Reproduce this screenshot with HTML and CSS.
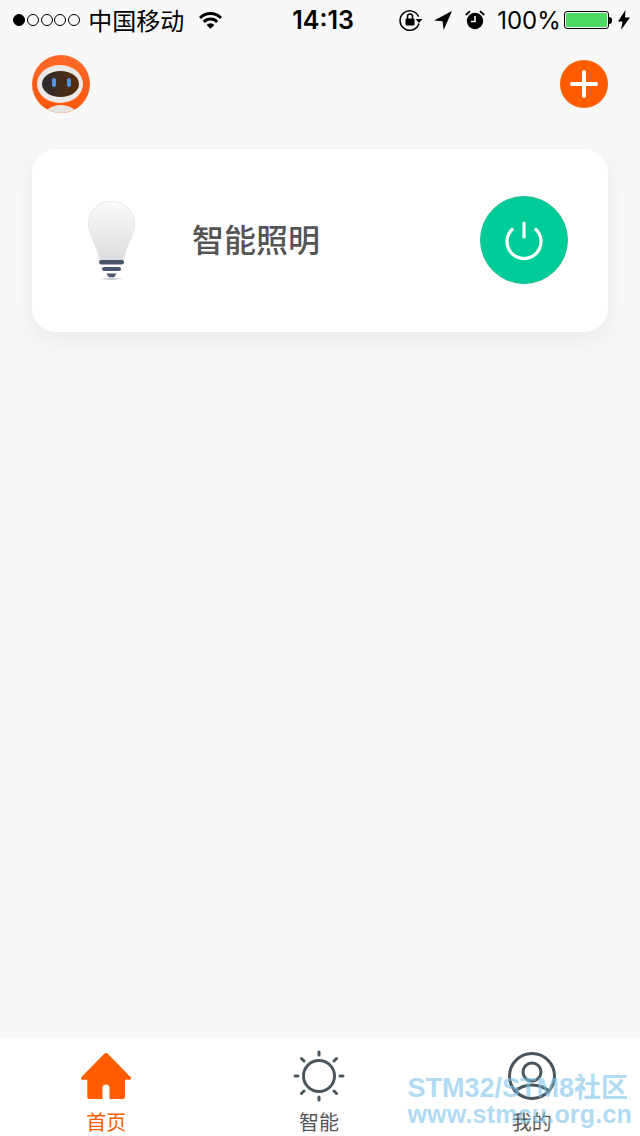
FILE: index.html
```html
<!DOCTYPE html>
<html lang="zh-CN">
<head>
    <meta charset="UTF-8">
    <meta name="viewport" content="width=device-width, initial-scale=1.0">
    <title>智能照明</title>
    <link rel="stylesheet" href="styles.css">
</head>
<body>

    <!-- Status bar -->
    <div class="status-bar">
        <div class="signal">
            <span class="dot dot-on"></span>
            <span class="dot"></span>
            <span class="dot"></span>
            <span class="dot"></span>
            <span class="dot"></span>
        </div>
        <span class="carrier">中国移动</span>
        <svg class="wifi" width="23" height="18" viewBox="0 0 26 20">
            <path d="M0 6.500a18 18 0 0 1 26 0l-2.300 2.400a15 15 0 0 0-21.400 0z" fill="#000"/>
            <path d="M4.300 11a12 12 0 0 1 17.400 0l-2.300 2.400a8.700 8.700 0 0 0-12.800 0z" fill="#000"/>
            <path d="M8.600 15.600a5.800 5.800 0 0 1 8.800 0L13 20z" fill="#000"/>
        </svg>
        <span class="time">14:13</span>
        <svg class="lock" width="24" height="22" viewBox="0 0 24 22">
            <path d="M20 14.500A9.700 9.700 0 1 1 19.600 7.600" fill="none" stroke="#000" stroke-width="1.500"/>
            <path d="M16.500 10h7l-3.500 4z" fill="#000"/>
            <rect x="6.500" y="9.500" width="9" height="7" rx="1" fill="#000"/>
            <path d="M8.500 10V7.600a2.500 2.500 0 0 1 5 0V10" fill="none" stroke="#000" stroke-width="1.500"/>
        </svg>
        <svg class="arrow" width="18" height="19" viewBox="0 0 18 19">
            <path d="M18 0L0 9.500l8.500 .8 1.200 8.700z" fill="#000"/>
        </svg>
        <svg class="alarm" width="20" height="20" viewBox="0 0 20 20">
            <circle cx="10" cy="11" r="8.200" fill="#000"/>
            <path d="M10 6v5.500H6" fill="none" stroke="#fff" stroke-width="1.500"/>
            <path d="M.8 5L5 1.200M19.200 5L15 1.200" stroke="#000" stroke-width="1.800"/>
        </svg>
        <span class="percent">100%</span>
        <div class="battery"><div class="battery-fill"></div></div>
        <span class="battery-tip"></span>
        <svg class="bolt" width="12" height="20" viewBox="0 0 12 20">
            <path d="M7.500 0L0 11.500h4.500L3 20l9-12.500H7z" fill="#000"/>
        </svg>
    </div>

    <header class="top-row">
        <svg class="avatar" width="58" height="58" viewBox="0 0 58 58">
            <defs>
                <linearGradient id="faceGrad" x1="0" x2="1" y1="0" y2="0">
                    <stop offset="0" stop-color="#2b2b2e"/>
                    <stop offset="1" stop-color="#5a2c08"/>
                </linearGradient>
                <linearGradient id="shellGrad" x1="0" x2="0" y1="0" y2="1">
                    <stop offset="0" stop-color="#ff6a2c"/>
                    <stop offset="1" stop-color="#fb5508"/>
                </linearGradient>
                <clipPath id="avatarClip"><circle cx="29" cy="29" r="29"/></clipPath>
            </defs>
            <circle cx="29" cy="29" r="29" fill="url(#shellGrad)"/>
            <g clip-path="url(#avatarClip)">
                <ellipse cx="29" cy="62" rx="17" ry="12" fill="#e6e2e0"/>
            </g>
            <ellipse cx="28" cy="29" rx="23" ry="19" fill="#ebe9e8"/>
            <ellipse cx="28.500" cy="29" rx="18.500" ry="13" fill="url(#faceGrad)"/>
            <rect x="20" y="23" width="4" height="9" rx="2" fill="#4f94e6"/>
            <rect x="35" y="23" width="4" height="9" rx="2" fill="#4f94e6"/>
        </svg>
        <button class="add-button">
            <svg width="28" height="28" viewBox="0 0 28 28">
                <path d="M14 2v24M2 14h24" stroke="#fff" stroke-width="4" stroke-linecap="round"/>
            </svg>
        </button>
    </header>

    <main class="content">
        <div class="device-card">
            <svg class="bulb" width="48" height="80" viewBox="0 0 48 80">
                <defs>
                    <linearGradient id="bulbGrad" x1="0" x2="0" y1="0" y2="1">
                        <stop offset="0" stop-color="#fbfbfb"/>
                        <stop offset="1" stop-color="#dcdcde"/>
                    </linearGradient>
                    <radialGradient id="bulbShadow">
                        <stop offset="0" stop-color="#b5b8bd"/>
                        <stop offset="1" stop-color="#ffffff"/>
                    </radialGradient>
                </defs>
                <path d="M23.500 .5C10.500 .5 .5 10 .5 23c0 12 8 19 11 36.500h24C38.500 42 46.500 35 46.500 23 46.500 10 36.500 .5 23.500 .5z" fill="url(#bulbGrad)" stroke="#e8e8e8"/>
                <rect x="11" y="59" width="25" height="4.500" rx="2.200" fill="#4a566d"/>
                <rect x="14" y="66" width="19" height="4" rx="2" fill="#4a566d"/>
                <path d="M18.500 72.500h10l-2.500 4h-5z" fill="#4a566d"/>
                <ellipse cx="23.500" cy="78" rx="13" ry="1.500" fill="url(#bulbShadow)"/>
            </svg>
            <span class="device-name">智能照明</span>
            <button class="power-button">
                <svg width="44" height="44" viewBox="0 0 44 44">
                    <path d="M10 11.500a17 17 0 1 0 24 0" fill="none" stroke="#fff" stroke-width="3.200" stroke-linecap="round"/>
                    <path d="M22 5v14" stroke="#fff" stroke-width="3.200" stroke-linecap="round"/>
                </svg>
            </button>
        </div>
    </main>

    <!-- Bottom tabs -->
    <nav class="tab-bar">
        <div class="tab tab-active">
            <div class="tab-icon">
                <svg width="52" height="48" viewBox="0 0 52 48">
                    <path d="M26 1a2 2 0 0 1 1.500 .6L50.500 25c1.200 1.300 .5 2.800-1 2.800H45v17.200a2 2 0 0 1-2 2H29.500V36a3.500 3.500 0 0 0-7 0v11H9.300a2 2 0 0 1-2-2V27.800H2.500c-1.500 0-2.200-1.500-1-2.800L24.500 1.600A2 2 0 0 1 26 1z" fill="#ff5c00"/>
                </svg>
            </div>
            <span>首页</span>
        </div>
        <div class="tab">
            <div class="tab-icon">
                <svg width="52" height="52" viewBox="0 0 52 52">
                    <circle cx="26" cy="26" r="15.500" fill="none" stroke="#4a555c" stroke-width="3"/>
                    <path d="M26 2v3M26 47v3M2 26h3M47 26h3M8.500 8.500l2.500 2.500M41 41l2.500 2.500M43.500 8.500L41 11M11 41l-2.500 2.500" stroke="#4a555c" stroke-width="3" stroke-linecap="round"/>
                </svg>
            </div>
            <span>智能</span>
        </div>
        <div class="tab">
            <div class="tab-icon">
                <svg width="48" height="48" viewBox="0 0 48 48">
                    <circle cx="24" cy="24" r="22.500" fill="none" stroke="#4a555c" stroke-width="3"/>
                    <circle cx="24" cy="20" r="9" fill="none" stroke="#4a555c" stroke-width="3"/>
                    <path d="M6 40C11 35.500 17 33 24 33S37 35.500 42 40" fill="none" stroke="#4a555c" stroke-width="3"/>
                </svg>
            </div>
            <span>我的</span>
        </div>
    </nav>

    <div class="watermark">
        <div class="watermark-title">STM32/STM8社区</div>
        <div class="watermark-url">www.stmcu.org.cn</div>
    </div>

</body>
</html>
```

FILE: styles.css
```css
/* General Body Styling */
body {
    font-family: "Liberation Sans", "Noto Sans CJK SC", sans-serif;
    background-color: #f8f8f8;
    margin: 0;
    width: 640px;
    height: 1136px;
    display: flex;
    flex-direction: column;
    position: relative;
    overflow: hidden;
    color: #000;
}

/* Status Bar */
.status-bar {
    display: flex;
    align-items: center;
    height: 40px;
    padding-left: 13px;
    flex-shrink: 0;
}

.signal {
    display: flex;
    gap: 1.8px;
}

.dot {
    width: 10px;
    height: 10px;
    border: 1px solid #000;
    border-radius: 50%;
}

.dot-on {
    background-color: #000;
}

.carrier {
    font-size: 24px;
    margin-left: 8px;
    padding-bottom: 2px;
    width: 96px;
}

.wifi {
    margin-left: 15px;
}

.time {
    font-family: Inter, sans-serif;
    font-size: 25px;
    font-weight: 600;
    margin-left: 70px;
    width: 63px;
}

.lock {
    margin-left: 44px;
}

.arrow {
    margin-left: 11px;
}

.alarm {
    margin-left: 13px;
}

.percent {
    font-family: Inter, sans-serif;
    font-size: 24px;
    margin-left: 12px;
    width: 61px;
}

.battery {
    width: 41px;
    height: 14px;
    margin-left: 6px;
    padding: 1px;
    border: 1px solid #000;
    border-radius: 3px;
}

.battery-fill {
    height: 100%;
    background-color: #4cd964;
    border-radius: 1px;
}

.battery-tip {
    width: 3px;
    height: 7px;
    background-color: #000;
    border-radius: 0 3px 3px 0;
}

.bolt {
    margin-left: 6px;
}

/* Header Styling */
.top-row {
    display: flex;
    justify-content: space-between;
    align-items: center;
    padding: 15px 32px 0;
    flex-shrink: 0;
}

.avatar {
    display: block;
}

.add-button {
    width: 48px;
    height: 48px;
    background-color: #ff5c00;
    border: none;
    border-radius: 50%;
    padding: 0;
    display: flex;
    align-items: center;
    justify-content: center;
}

/* Device Card */
.content {
    flex: 1;
    padding: 36px 32px 0;
}

.device-card {
    display: flex;
    align-items: center;
    height: 182px;
    padding: 0 40px 1px 56px;
    background-color: #fff;
    border-radius: 24px;
    box-shadow: 0 8px 24px rgba(0, 0, 0, 0.06);
}

.bulb {
    display: block;
    flex-shrink: 0;
    margin-top: 2px;
}

.device-name {
    font-size: 32px;
    font-weight: 500;
    color: #555;
    margin-left: 56px;
    padding-bottom: 4px;
    flex: 1;
}

.power-button {
    width: 88px;
    height: 88px;
    background-color: #00cc99;
    border: 1px solid #1bbf93;
    border-radius: 50%;
    padding: 0;
    display: flex;
    align-items: center;
    justify-content: center;
}

/* Tab Bar */
.tab-bar {
    display: grid;
    grid-template-columns: repeat(3, 1fr);
    height: 98px;
    padding-right: 2px;
    background-color: #fff;
    flex-shrink: 0;
}

.tab {
    display: flex;
    flex-direction: column;
    align-items: center;
    padding-top: 12px;
    gap: 7px;
    font-size: 20px;
    line-height: 28px;
    color: #555;
}

.tab-icon {
    height: 52px;
    display: flex;
    align-items: center;
}

.tab-icon svg {
    display: block;
}

.tab-active {
    color: #ff5c00;
}

/* Watermark over the tabs */
.watermark {
    position: absolute;
    right: 8px;
    bottom: 9px;
    font-weight: bold;
    color: rgba(122, 196, 235, 0.6);
    text-align: right;
    line-height: 1;
}

.watermark-title {
    font-size: 27px;
    margin-right: 4px;
}

.watermark-url {
    font-size: 25px;
    letter-spacing: 0.2px;
}
```
